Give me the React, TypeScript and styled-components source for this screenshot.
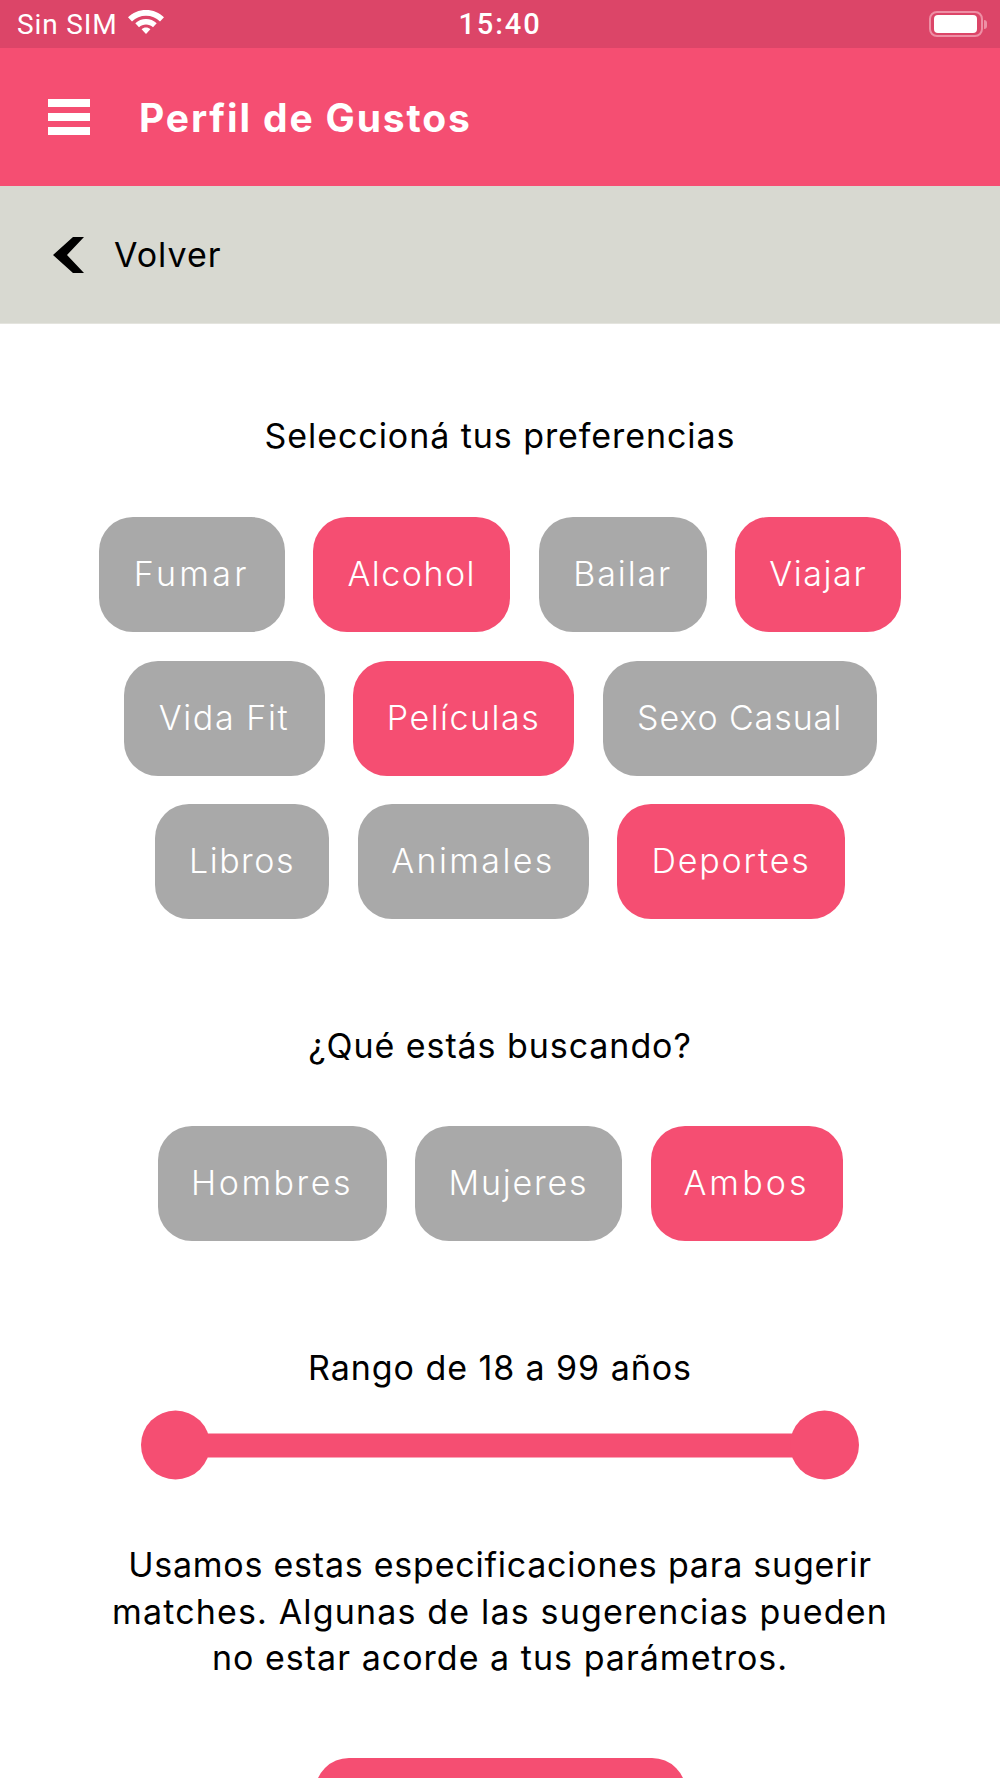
import React from "react";
import styled, { createGlobalStyle } from "styled-components";

const PINK = "#f54e72";
const GREY = "#a9a9a9";

const preferences = [
  [
    { label: "Fumar", width: 186, spacing: 3.3, on: false },
    { label: "Alcohol", width: 197, spacing: 1.5, on: true },
    { label: "Bailar", width: 168, spacing: 1.9, on: false },
    { label: "Viajar", width: 166, spacing: 1.6, on: true },
  ],
  [
    { label: "Vida Fit", width: 201, spacing: 1.6, on: false },
    { label: "Películas", width: 221, spacing: 1.5, on: true },
    { label: "Sexo Casual", width: 274, spacing: 0.9, on: false },
  ],
  [
    { label: "Libros", width: 174, spacing: 1.5, on: false },
    { label: "Animales", width: 231, spacing: 2.4, on: false },
    { label: "Deportes", width: 228, spacing: 1.8, on: true },
  ],
];

const seeking = [
  { label: "Hombres", width: 229, spacing: 2.5, on: false },
  { label: "Mujeres", width: 207, spacing: 1.8, on: false },
  { label: "Ambos", width: 192, spacing: 3.1, on: true },
];

const noteLines = [
  { text: "Usamos estas especificaciones para sugerir", spacing: 0.76 },
  { text: "matches. Algunas de las sugerencias pueden", spacing: 1.16 },
  { text: "no estar acorde a tus parámetros.", spacing: 1.02 },
];

const App: React.FC = () => {
  return (
    <>
      <GlobalStyle />
      <Page>
        <StatusBar>
          <Carrier>
            Sin SIM
            <svg width="38" height="28" viewBox="0 0 38 28">
              <path
                d="M19 2C12 2 5.500 4.700 1 9.300L5 13.500C8.800 9.800 13.600 7.800 19 7.800S29.200 9.800 33 13.500L37 9.300C32.500 4.700 26 2 19 2Z"
                fill="#fff"
              />
              <path
                d="M19 11C15 11 11.200 12.500 8.300 15.200L12 19.200C14 17.400 16.300 16.500 19 16.500S24 17.400 26 19.200L29.700 15.200C26.800 12.500 23 11 19 11Z"
                fill="#fff"
              />
              <path
                d="M19 19.500C17.300 19.500 15.800 20.100 14.600 21.200L19 26L23.400 21.200C22.200 20.100 20.700 19.500 19 19.500Z"
                fill="#fff"
              />
            </svg>
          </Carrier>
          <Clock>15:40</Clock>
          <Battery>
            <BatteryBody>
              <BatteryLevel />
            </BatteryBody>
            <BatteryNub />
          </Battery>
        </StatusBar>

        <Header>
          <Burger>
            <span />
            <span />
            <span />
          </Burger>
          <Title>Perfil de Gustos</Title>
        </Header>

        <BackBar>
          <svg width="33" height="36" viewBox="0 0 33 36">
            <path d="M21 0H32L15 18L32 36H21L1 18Z" fill="#000" />
          </svg>
          <BackLabel>Volver</BackLabel>
        </BackBar>

        <Main>
          <Heading>Seleccioná tus preferencias</Heading>
          <ChipGroup>
            {preferences.map((row, i) => (
              <ChipRow key={i}>
                {row.map((chip) => (
                  <Chip
                    key={chip.label}
                    $width={chip.width}
                    $spacing={chip.spacing}
                    $on={chip.on}
                  >
                    {chip.label}
                  </Chip>
                ))}
              </ChipRow>
            ))}
          </ChipGroup>

          <SectionHeading>¿Qué estás buscando?</SectionHeading>
          <ChipGroup>
            <ChipRow>
              {seeking.map((chip) => (
                <Chip
                  key={chip.label}
                  $width={chip.width}
                  $spacing={chip.spacing}
                  $on={chip.on}
                >
                  {chip.label}
                </Chip>
              ))}
            </ChipRow>
          </ChipGroup>

          <RangeHeading>Rango de 18 a 99 años</RangeHeading>
          <Slider>
            <Thumb />
            <Track />
            <Thumb />
          </Slider>

          <Note>
            {noteLines.map((line) => (
              <NoteLine key={line.text} $spacing={line.spacing}>
                {line.text}
              </NoteLine>
            ))}
          </Note>

          <SaveButton />
        </Main>
      </Page>
    </>
  );
};

export default App;

const GlobalStyle = createGlobalStyle`
  html, body {
    margin: 0;
    padding: 0;
    background: #fff;
  }
`;

const Page = styled.div`
  width: 1000px;
  height: 1778px;
  overflow: hidden;
  font-family: Inter, "Liberation Sans", sans-serif;
  color: #000;
`;

const StatusBar = styled.div`
  height: 48px;
  background: #dc4568;
  display: grid;
  grid-template-columns: 1fr auto 1fr;
  align-items: center;
  padding: 0 13px 0 17px;
  box-sizing: border-box;
  color: #fff;
  font-family: Roboto, "Liberation Sans", sans-serif;
`;

const Carrier = styled.div`
  display: flex;
  align-items: center;
  gap: 10px;
  font-size: 28px;
  letter-spacing: 0.85px;

  svg {
    margin-top: -4px;
  }
`;

const Clock = styled.div`
  font-size: 29px;
  font-weight: 500;
  letter-spacing: 1.9px;
  margin-left: -4px;
`;

const Battery = styled.div`
  display: flex;
  align-items: center;
  justify-content: flex-end;
`;

const BatteryBody = styled.div`
  width: 54px;
  height: 26px;
  box-sizing: border-box;
  border: 2px solid #ee8fa5;
  border-radius: 8px;
  padding: 2px 4px 2px 3px;
  display: flex;
`;

const BatteryLevel = styled.div`
  flex: 1;
  background: #fff;
  border-radius: 4px;
`;

const BatteryNub = styled.div`
  width: 3px;
  height: 9px;
  margin-left: 1px;
  background: #ee8fa5;
  border-radius: 0 4px 4px 0;
`;

const Header = styled.header`
  height: 138px;
  background: ${PINK};
  display: flex;
  align-items: center;
  gap: 49px;
  padding-left: 48px;
  color: #fff;
`;

const Burger = styled.div`
  width: 42px;
  display: flex;
  flex-direction: column;
  gap: 6px;

  span {
    display: block;
    height: 8px;
    background: #fff;
  }
`;

const Title = styled.h1`
  margin: 2px 0 0;
  font-size: 39px;
  font-weight: 700;
  line-height: 46px;
  letter-spacing: 1.850px;
`;

const BackBar = styled.div`
  height: 138px;
  box-sizing: border-box;
  background: #d8d9d1;
  border-bottom: 1px solid #e4e4de;
  display: flex;
  align-items: center;
  gap: 29px;
  padding-left: 52px;
`;

const BackLabel = styled.span`
  font-size: 34px;
  line-height: 46px;
  letter-spacing: 1px;
`;

const Main = styled.main`
  padding-top: 89px;
  display: flex;
  flex-direction: column;
  align-items: center;
`;

const Heading = styled.h2`
  margin: 0 0 58px;
  font-size: 34px;
  font-weight: 400;
  line-height: 46px;
  letter-spacing: 0.93px;
  text-align: center;
`;

const SectionHeading = styled(Heading)`
  margin-top: 104px;
  margin-bottom: 57px;
`;

const RangeHeading = styled(Heading)`
  margin-top: 104px;
  margin-bottom: 19px;
`;

const ChipGroup = styled.div`
  display: flex;
  flex-direction: column;
  gap: 28.500px;
`;

const ChipRow = styled.div`
  display: flex;
  justify-content: center;
  gap: 28.500px;
`;

const Chip = styled.div<{ $width: number; $spacing: number; $on: boolean }>`
  width: ${(props) => props.$width}px;
  height: 115px;
  padding-bottom: 2px;
  box-sizing: border-box;
  border-radius: 34px;
  background: ${(props) => (props.$on ? PINK : GREY)};
  color: #fff;
  font-size: 34px;
  font-weight: 300;
  letter-spacing: ${(props) => props.$spacing}px;
  display: flex;
  align-items: center;
  justify-content: center;
  white-space: nowrap;
`;

const Slider = styled.div`
  width: 718px;
  display: flex;
  align-items: center;
  transform: translateY(0.500px);
`;

const Thumb = styled.div`
  width: 69px;
  height: 69px;
  flex-shrink: 0;
  border-radius: 50%;
  background: ${PINK};
`;

const Track = styled.div`
  flex: 1;
  height: 24px;
  margin: 0 -4px;
  background: ${PINK};
`;

const Note = styled.div`
  margin-top: 63px;
  font-size: 34px;
  line-height: 46.500px;
  text-align: center;
  white-space: nowrap;
`;

const NoteLine = styled.div<{ $spacing: number }>`
  letter-spacing: ${(props) => props.$spacing}px;
`;

const SaveButton = styled.button`
  flex-shrink: 0;
  width: 371px;
  height: 115px;
  margin-top: 76px;
  border: none;
  border-radius: 34px;
  background: ${PINK};
`;
